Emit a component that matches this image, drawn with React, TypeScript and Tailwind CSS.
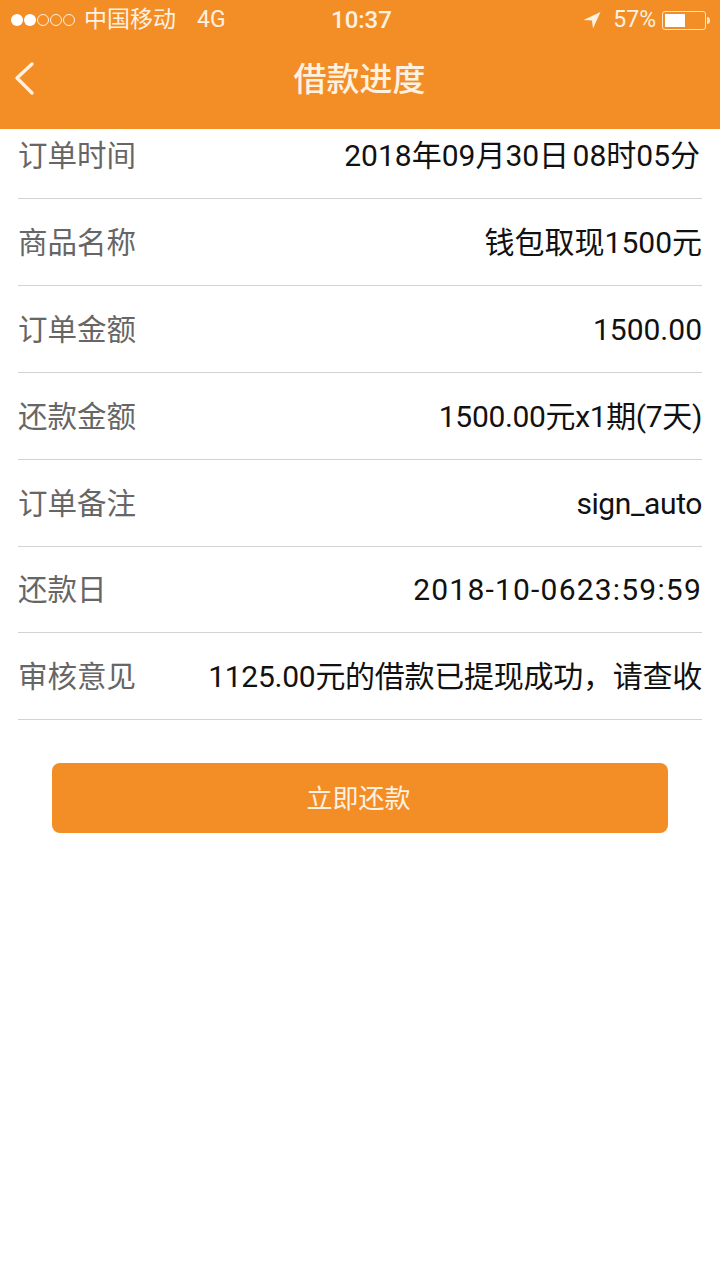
const rows = [
  { label: "订单时间", value: "2018年09月30日 08时05分", fit: "mr-[2px] [word-spacing:-4px]" },
  { label: "商品名称", value: "钱包取现1500元", fit: "" },
  { label: "订单金额", value: "1500.00", fit: "" },
  { label: "还款金额", value: "1500.00元x1期(7天)", fit: "tracking-[-0.35px]" },
  { label: "订单备注", value: "sign_auto", fit: "tracking-[-0.4px]" },
  { label: "还款日", value: "2018-10-0623:59:59", fit: "tracking-[1.2px]" },
  { label: "审核意见", value: "1125.00元的借款已提现成功，请查收", fit: "tracking-[-0.26px]" },
];

function StatusBar() {
  return (
    <div className="flex items-center h-[40px] pl-[11px] pr-[10px] text-[23px] text-[#fdf1e2]">
      {/* signal dots */}
      <div className="flex items-center gap-[1px]">
        <span className="w-[12px] h-[12px] rounded-full bg-white" />
        <span className="w-[12px] h-[12px] rounded-full bg-white" />
        <span className="w-[12px] h-[12px] rounded-full border border-[#fdf1e2]" />
        <span className="w-[12px] h-[12px] rounded-full border border-[#fdf1e2]" />
        <span className="w-[12px] h-[12px] rounded-full border border-[#fdf1e2]" />
      </div>
      <span className="ml-[9px] w-[113px]">中国移动</span>
      <span className="w-[134px] text-[23px]">4G</span>
      <span className="font-medium text-[24px]">10:37</span>
      <div className="ml-auto flex items-center">
        <svg width="18" height="18" viewBox="0 0 18 18" className="mr-[12px]">
          <path d="M17.5 1 L0.5 9 L9 9.5 L10 17.5 Z" fill="#fdf1e2" />
        </svg>
        <span className="mr-[6px] mt-[1px]">57%</span>
        <div className="relative w-[44px] h-[19px] mr-[4px] rounded-[3px] border border-[#fbe3c6] p-[2px]">
          <div className="w-[52%] h-full bg-white" />
          <span className="absolute right-[-5px] top-[5px] w-[3px] h-[7px] rounded-r-full bg-[#fbe3c6]" />
        </div>
      </div>
    </div>
  );
}

export default function App() {
  return (
    <div className="w-[720px] h-[1280px] bg-white overflow-hidden font-['Roboto','Noto_Sans_CJK_SC',sans-serif]">
      <header className="h-[129px] bg-[#f38d26]">
        <StatusBar />
        <div className="relative flex items-center justify-center h-[80px]">
          <svg width="24" height="36" viewBox="0 0 24 36" fill="none" className="absolute left-[13px] top-[20px]">
            <path d="M19 4 L4 18 L19 33" stroke="#fdf1e2" strokeWidth="3.4" strokeLinecap="round" strokeLinejoin="round" />
          </svg>
          <h1 className="text-[33px] font-medium text-[#fdf1e2] mr-[1px]">借款进度</h1>
        </div>
      </header>

      <div className="mx-[18px]">
        {rows.map((row, i) => (
          <div
            key={row.label}
            className={`flex items-center justify-between border-b border-[#d3d3d3] ${i === 0 ? "h-[70px] pb-[16px]" : i === 5 ? "h-[86px]" : "h-[87px]"}`}
          >
            <span className="mt-[2px] text-[29.5px] text-[#666666]">{row.label}</span>
            <span className={`text-[30px] text-[#111111] ${row.fit}`}>{row.value}</span>
          </div>
        ))}
      </div>

      <div className="mx-[52px] mt-[43px] h-[70px] rounded-[8px] bg-[#f38d26] flex items-center justify-center text-[26px] text-[#fdf1e2]">
        <span className="mt-[3px] mr-[3px]">立即还款</span>
      </div>
    </div>
  );
}
